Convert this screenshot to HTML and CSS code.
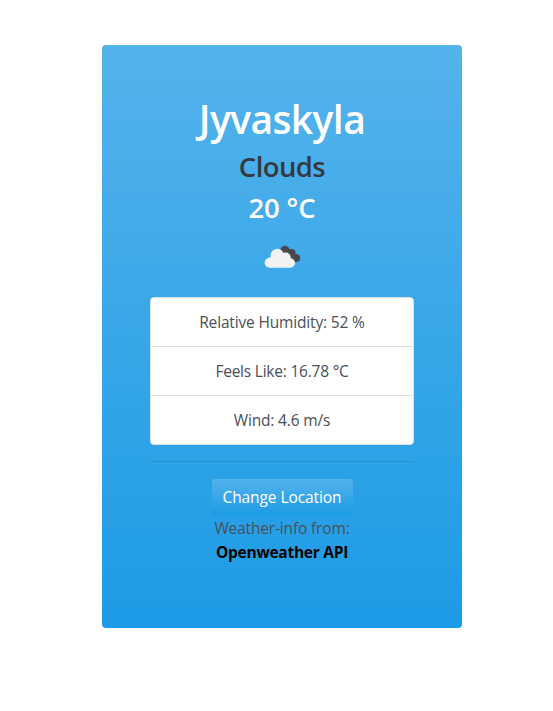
FILE: index.html
```html
<!DOCTYPE html>
<html lang="en">
<head>
<meta charset="utf-8">
<title>Weather</title>
<link rel="stylesheet" href="styles.css">
</head>
<body>
<main class="card">
  <h1 class="city">Jyvaskyla</h1>
  <h2 class="condition">Clouds</h2>
  <h2 class="temp">20 °C</h2>
  <svg class="icon" width="50" height="50" viewBox="0 0 50 50" aria-hidden="true">
    <g fill="#484848">
      <circle cx="28" cy="16.500" r="4.700"/>
      <circle cx="34.500" cy="19" r="4"/>
      <circle cx="39.200" cy="24" r="3.900"/>
      <path d="M25 18l9-1 4 11-8-1z"/>
    </g>
    <g fill="#f2f2f2">
      <circle cx="12.700" cy="28.700" r="5"/>
      <circle cx="20.300" cy="21.500" r="6.700"/>
      <circle cx="28.700" cy="23.500" r="5"/>
      <circle cx="33.300" cy="29" r="4.700"/>
      <path d="M12.700 23h20v10.700h-20z"/>
    </g>
  </svg>
  <ul class="list">
    <li class="item humidity">Relative Humidity: 52 %</li>
    <li class="item feels">Feels Like: 16.78 °C</li>
    <li class="item wind">Wind: 4.6 m/s</li>
  </ul>
  <hr class="rule">
  <button class="button" type="button">Change Location</button>
  <p class="source">Weather-info from:</p>
  <a class="link">Openweather API</a>
</main>
</body>
</html>
```

FILE: styles.css
```css
* { box-sizing: border-box; }
body { margin: 0; background: #fff; font: 15.5px/24px "Segoe UI", "Open Sans", "Noto Sans", sans-serif; color: #495057; }
.card { width: 360px; height: 583px; margin: 45px 0 0 102px; padding: 48px; border-radius: 4px; background: linear-gradient(#54b3eb, #1c9be6); display: flex; flex-direction: column; align-items: center; }
h1, h2, p, ul { margin: 0; padding: 0; }
h1, h2 { white-space: nowrap; font-weight: 600; }
.city { font-size: 39px; line-height: 48px; margin: 2px 0 7px; letter-spacing: -.6px; color: #fff; }
.condition { font-size: 27.5px; line-height: 34px; margin-bottom: 7px; letter-spacing: -.6px; color: #343a40; }
.temp { font-size: 27.5px; line-height: 34px; letter-spacing: -.2px; color: #fff; }
.icon { display: block; margin: 9px 0 13px; }
.list { width: 264px; height: 148px; list-style: none; background: #fff; border: 1px solid #dfdfdf; border-radius: 4px; flex: none; }
.item { height: 49px; line-height: 49px; text-align: center; letter-spacing: -.16px; border-bottom: 1px solid #dfdfdf; }
.feels { letter-spacing: -.22px; }
.item:last-child { border: 0; }
.rule { width: 264px; height: 1px; flex: none; margin: 16px 0; border: 0; background: rgba(0,0,0,.1); }
.button { width: 143px; height: 38px; flex: none; padding: 0; border: 1px solid transparent; border-radius: 4px; background: linear-gradient(#54b3eb, #1c9be6) padding-box; font: inherit; letter-spacing: -.08px; color: #fff; }
.source { letter-spacing: -.16px; }
.link { color: #000; font-weight: 700; letter-spacing: -.26px; }
```
